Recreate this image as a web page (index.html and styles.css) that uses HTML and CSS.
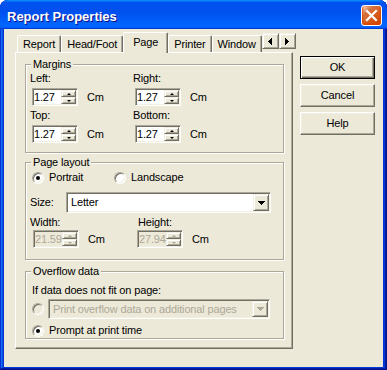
FILE: index.html
```html
<!DOCTYPE html>
<html lang="en">
<head>
    <meta charset="UTF-8">
    <title>Report Properties</title>
    <link rel="stylesheet" href="styles.css">
</head>
<body>
    <div class="window">
        <div class="titlebar">
            <span class="title">Report Properties</span>
            <button class="close" aria-label="Close">
                <svg width="19" height="19" viewBox="0 0 19 19"><path d="M5 5L14 14M14 5L5 14" stroke="#fff" stroke-width="2.2" stroke-linecap="square"/></svg>
            </button>
        </div>

        <div class="client">
            <div class="tabs-area">
                <div class="tabstrip">
                    <div class="tab">Report</div>
                    <div class="tab">Head/Foot</div>
                    <div class="tab active">Page</div>
                    <div class="tab">Printer</div>
                    <div class="tab">Window</div>
                    <div class="tab-scroll">
                        <button class="raised arrow-btn"><svg width="4" height="7"><path d="M3 0h1v7H3z M2 1h1v5H2z M1 2h1v3H1z M0 3h1v1H0z"/></svg></button>
                        <button class="raised arrow-btn"><svg width="4" height="7"><path d="M0 0h1v7H0z M1 1h1v5H1z M2 2h1v3H2z M3 3h1v1H3z"/></svg></button>
                    </div>
                </div>

                <div class="panel">
                    <!-- margins -->
                    <div class="group margins">
                        <div class="group-title">Margins</div>
                        <div class="field-grid">
                            <div class="field">
                                <div class="label">Left:</div>
                                <div class="field-row">
                                    <div class="spin"><span class="spin-text">1.27</span><span class="spin-btns"><span class="spin-btn up"></span><span class="spin-btn down"></span></span></div>
                                    <span class="unit">Cm</span>
                                </div>
                            </div>
                            <div class="field">
                                <div class="label">Right:</div>
                                <div class="field-row">
                                    <div class="spin"><span class="spin-text">1.27</span><span class="spin-btns"><span class="spin-btn up"></span><span class="spin-btn down"></span></span></div>
                                    <span class="unit">Cm</span>
                                </div>
                            </div>
                            <div class="field">
                                <div class="label">Top:</div>
                                <div class="field-row">
                                    <div class="spin"><span class="spin-text">1.27</span><span class="spin-btns"><span class="spin-btn up"></span><span class="spin-btn down"></span></span></div>
                                    <span class="unit">Cm</span>
                                </div>
                            </div>
                            <div class="field">
                                <div class="label">Bottom:</div>
                                <div class="field-row">
                                    <div class="spin"><span class="spin-text">1.27</span><span class="spin-btns"><span class="spin-btn up"></span><span class="spin-btn down"></span></span></div>
                                    <span class="unit">Cm</span>
                                </div>
                            </div>
                        </div>
                    </div>

                    <!-- page layout -->
                    <div class="group layout">
                        <div class="group-title">Page layout</div>
                        <div class="radio-row">
                            <label class="option portrait"><span class="radio checked"></span>Portrait</label>
                            <label class="option"><span class="radio"></span>Landscape</label>
                        </div>
                        <div class="size-row">
                            <span class="size-label">Size:</span>
                            <div class="combo size-combo">
                                <span class="combo-text">Letter</span>
                                <span class="raised combo-btn"><svg width="7" height="4"><path d="M0 0h7v1H0z M1 1h5v1H1z M2 2h3v1H2z M3 3h1v1H3z"/></svg></span>
                            </div>
                        </div>
                        <div class="dim-grid">
                            <div class="field">
                                <div class="label">Width:</div>
                                <div class="field-row">
                                    <div class="spin disabled"><span class="spin-text">21.59</span><span class="spin-btns"><span class="spin-btn up"></span><span class="spin-btn down"></span></span></div>
                                    <span class="unit">Cm</span>
                                </div>
                            </div>
                            <div class="field">
                                <div class="label">Height:</div>
                                <div class="field-row">
                                    <div class="spin disabled"><span class="spin-text">27.94</span><span class="spin-btns"><span class="spin-btn up"></span><span class="spin-btn down"></span></span></div>
                                    <span class="unit">Cm</span>
                                </div>
                            </div>
                        </div>
                    </div>

                    <!-- overflow -->
                    <div class="group overflow">
                        <div class="group-title">Overflow data</div>
                        <div class="note">If data does not fit on page:</div>
                        <div class="overflow-row">
                            <span class="radio disabled"></span>
                            <div class="combo overflow-combo disabled">
                                <span class="combo-text">Print overflow data on additional pages</span>
                                <span class="raised combo-btn"><svg width="7" height="4"><path d="M0 0h7v1H0z M1 1h5v1H1z M2 2h3v1H2z M3 3h1v1H3z"/></svg></span>
                            </div>
                        </div>
                        <label class="option prompt"><span class="radio checked"></span>Prompt at print time</label>
                    </div>
                </div>
            </div>

            <div class="buttons">
                <button class="btn default">OK</button>
                <button class="btn">Cancel</button>
                <button class="btn">Help</button>
            </div>
        </div>
    </div>
</body>
</html>
```

FILE: styles.css
```css
*{margin: 0;
  padding: 0;
  box-sizing: border-box;
}

body{
  width: 387px;
  height: 370px;
  background-color: #fff;
  font-family: "Liberation Sans", Arial, sans-serif;
  font-size: 11px;
  line-height: 13px;
  letter-spacing: -0.15px;
  color: #000;
  overflow: hidden;
}

button{
  font: inherit;
  color: inherit;
  letter-spacing: inherit;
}

/* window frame */
.window{
  width: 387px;
  height: 370px;
  display: flex;
  flex-direction: column;
  background-color: #0831d9;
  border-radius: 8px 8px 0 0;
  overflow: hidden;
  box-shadow: inset -1px -1px #00138c, inset 1px 1px #0831d9,
              inset -2px -2px #001ea0, inset 2px 2px #166aee,
              inset -3px -3px #003bda, inset 3px 3px #0855dd;
}

.titlebar{
  flex: none;
  height: 29px;
  display: flex;
  align-items: center;
  padding: 4px 5px 0 7px;
  border-radius: 8px 8px 0 0;
  background: linear-gradient(180deg, #0997ff, #0053ee 8%, #0050ee 40%, #06f 88%, #06f 93%, #005bff 95%, #003dd7 96%, #003dd7);
}

.title{
  flex: 1;
  color: #fff;
  font-size: 13px;
  font-weight: bold;
  letter-spacing: 0;
  text-shadow: 1px 1px #0f1089;
}

.close{
  align-self: flex-start;
  margin-top: 1px;
  width: 21px;
  height: 21px;
  display: flex;
  align-items: center;
  justify-content: center;
  border: 1px solid #fff;
  border-radius: 3px;
  background: radial-gradient(circle at 90% 90%, #cc4600 0%, #dc6527 55%, #cd7546 70%, #ffccb2 90%, #fff 100%);
  box-shadow: inset 0 -1px 2px 1px #da4600;
}

.client{
  flex: 1;
  display: flex;
  margin: 0 4px 3px;
  padding: 3px 0 0 11px;
  background-color: #ece9d8;
}

/* classic 3d helpers */
.raised{
  background-color: #ece9d8;
  border: 1px solid;
  border-color: #f1efe2 #716f64 #716f64 #f1efe2;
  box-shadow: inset 1px 1px #fff, inset -1px -1px #aca899;
}

/* tabs */
.tabs-area{
  flex: none;
  width: 278px;
}

.tabstrip{
  display: flex;
  align-items: flex-end;
  height: 20px;
  padding-left: 2px;
}

.tab{
  height: 17px;
  display: flex;
  align-items: center;
  justify-content: center;
  padding: 0 5px;
  border: 1px solid;
  border-bottom: none;
  border-color: #fff #716f64 transparent #fff;
  border-radius: 2px 2px 0 0;
  box-shadow: inset -1px 0 #aca899;
  background-color: #ece9d8;
}

.tab.active{
  height: 21px;
  margin-bottom: -1px;
  padding: 0 9px 2px;
  position: relative;
  z-index: 1;
}

.tab-scroll{
  display: flex;
  align-self: flex-start;
  margin: 1px 0 0 auto;
}

.arrow-btn{
  width: 17px;
  height: 16px;
  display: flex;
  align-items: center;
  justify-content: center;
}

.panel{
  height: 297px;
  padding: 11px 0 0 9px;
  border: 1px solid;
  border-color: #fff #716f64 #716f64 #fff;
  box-shadow: inset -1px -1px #aca899;
}

/* group boxes */
.group{
  width: 259px;
  padding-left: 4px;
  border: 1px solid #aca899;
  box-shadow: 1px 1px #fff, inset 1px 1px #fff;
}

.group-title{
  width: fit-content;
  margin: -7px 0 0 1px;
  padding: 0 2px;
  background-color: #ece9d8;
}

.margins{
  height: 89px;
}

.layout{
  height: 98px;
  margin-top: 9px;
}

.overflow{
  height: 68px;
  margin-top: 11px;
}

.field-grid{
  display: grid;
  grid-template-columns: 103px 103px;
  row-gap: 3px;
  margin-top: 1px;
}

.label{
  margin-bottom: 3px;
}

.field-row{
  display: flex;
  align-items: center;
  padding-left: 2px;
}

.unit{
  margin-left: 9px;
}

/* spin edit */
.spin{
  width: 46px;
  height: 18px;
  display: flex;
  padding: 1px;
  border: 1px solid;
  border-color: #aca899 #fff #fff #aca899;
  box-shadow: inset 1px 1px #716f64, inset -1px -1px #f1efe2;
  background-color: #fff;
}

.spin-text{
  flex: 1;
  line-height: 14px;
  overflow: hidden;
}

.spin-btns{
  width: 15px;
  display: flex;
  flex-direction: column;
}

.spin-btn{
  flex: 1;
  display: flex;
  align-items: center;
  justify-content: center;
  background-color: #ece9d8;
  border: 1px solid;
  border-color: #f1efe2 #716f64 #716f64 #f1efe2;
  box-shadow: inset 1px 1px #fff, inset -1px -1px #aca899;
}

.spin-btn::after{
  content: "";
  border-left: 2px solid transparent;
  border-right: 2px solid transparent;
}

.spin-btn.up::after{
  border-bottom: 2px solid #000;
}

.spin-btn.down::after{
  border-top: 2px solid #000;
}

.spin.disabled{
  background-color: #ece9d8;
  color: #aca899;
}

.spin.disabled .spin-btn.up::after{
  border-bottom-color: #aca899;
}

.spin.disabled .spin-btn.down::after{
  border-top-color: #aca899;
}

/* radios */
.radio-row{
  display: flex;
  align-items: center;
  height: 13px;
  margin-top: 2px;
  padding-left: 2px;
}

.option{
  display: flex;
  align-items: center;
  gap: 5px;
  height: 13px;
}

.portrait{
  width: 82px;
}

.radio{
  width: 12px;
  height: 12px;
  flex: none;
  display: flex;
  align-items: center;
  justify-content: center;
  border-radius: 50%;
  border: 1px solid;
  border-color: #aca899 #fff #fff #aca899;
  box-shadow: inset 1px 1px #716f64, inset -1px -1px #f1efe2;
  background-color: #fff;
}

.radio.checked::after{
  content: "";
  width: 4px;
  height: 4px;
  border-radius: 50%;
  background-color: #000;
}

.radio.disabled{
  background-color: #ece9d8;
}

/* combo boxes */
.size-row{
  display: flex;
  align-items: center;
  margin-top: 8px;
}

.size-label{
  width: 36px;
}

.combo{
  display: flex;
  padding: 1px;
  border: 1px solid;
  border-color: #aca899 #fff #fff #aca899;
  box-shadow: inset 1px 1px #716f64, inset -1px -1px #f1efe2;
  background-color: #fff;
}

.size-combo{
  width: 205px;
  height: 21px;
}

.combo-text{
  flex: 1;
  display: flex;
  align-items: center;
  padding-left: 3px;
  white-space: nowrap;
  overflow: hidden;
}

.combo-btn{
  width: 16px;
  display: flex;
  align-items: center;
  justify-content: center;
}

.combo.disabled{
  background-color: #ece9d8;
  color: #aca899;
}

.combo.disabled .combo-btn svg{
  fill: #aca899;
}

.dim-grid{
  display: grid;
  grid-template-columns: 107px auto;
  margin-top: 3px;
}

.dim-grid .label{
  margin-bottom: 1px;
}

.dim-grid .field-row{
  padding-left: 3px;
}

.dim-grid .field + .field .label{
  padding-left: 1px;
}

.dim-grid .field + .field .field-row{
  padding-left: 0;
}

.note{
  margin-top: 6px;
  padding-left: 2px;
}

.overflow-row{
  display: flex;
  align-items: center;
  gap: 4px;
  margin-top: 2px;
  padding-left: 2px;
}

.overflow-combo{
  width: 222px;
  height: 20px;
}

.prompt{
  margin-top: 5px;
  padding-left: 2px;
}

/* dialog buttons */
.buttons{
  display: flex;
  flex-direction: column;
  gap: 5px;
  margin: 24px 0 0 7px;
}

.btn{
  width: 75px;
  height: 23px;
  background-color: #ece9d8;
  border: 1px solid;
  border-color: #fff #716f64 #716f64 #fff;
  box-shadow: inset -1px -1px #aca899, inset 1px 1px #f1efe2;
}

.btn.default{
  border-color: #000;
  box-shadow: inset 1px 1px #fff, inset -1px -1px #716f64, inset -2px -2px #aca899;
}
```
